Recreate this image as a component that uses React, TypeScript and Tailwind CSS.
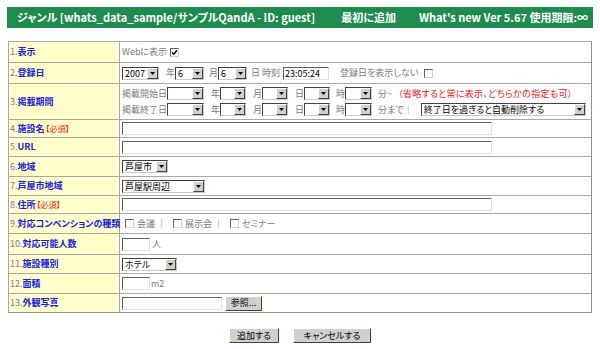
import React from "react";

const Arrow = () => (
  <svg width="5" height="3" viewBox="0 0 5 3">
    <path d="M0 0H5L2.5 3Z" fill="#000" />
  </svg>
);

function Sel({ w, text = "" }: { w: string; text?: string }) {
  return (
    <div className={`${w} h-[13px] flex shrink-0 border border-t-[#404040] border-l-[#404040] border-r-[#c8c8c8] border-b-[#c8c8c8] bg-white`}>
      <div className="flex-1 overflow-hidden whitespace-nowrap pl-[2px] text-[9px] leading-[11px] text-black">{text}</div>
      <div className="flex h-full w-[11px] items-center justify-center border border-t-white border-l-white border-r-[#404040] border-b-[#404040] bg-[#d4d0c8]">
        <Arrow />
      </div>
    </div>
  );
}

function Inp({ w, value = "" }: { w: string; value?: string }) {
  return (
    <div className={`${w} h-[13px] shrink-0 border border-t-[#606060] border-l-[#606060] border-r-[#e0e0e0] border-b-[#e0e0e0] bg-white pl-[1px] text-[9px] leading-[11px] text-black`}>
      {value}
    </div>
  );
}

function Chk({ checked = false }: { checked?: boolean }) {
  return (
    <div className="flex h-[9px] w-[9px] shrink-0 items-center justify-center border border-t-[#606060] border-l-[#606060] border-r-[#d0d0d0] border-b-[#d0d0d0] bg-white">
      {checked && (
        <svg width="7" height="7" viewBox="0 0 7 7">
          <path d="M1 3.2 L2.8 5.2 L6 1.2" stroke="#000" strokeWidth="1.4" fill="none" />
        </svg>
      )}
    </div>
  );
}

function Btn({ w, children }: { w: string; children: React.ReactNode }) {
  return (
    <div className={`${w} flex h-[15px] shrink-0 items-center justify-center border border-t-white border-l-white border-r-[#404040] border-b-[#404040] bg-[#d4d0c8] text-[9px] text-black`}>
      {children}
    </div>
  );
}

function Label({ n, name, req = false }: { n: string; name: string; req?: boolean }) {
  return (
    <div className="flex w-[111px] shrink-0 items-center whitespace-nowrap border-r border-[#a8a8a8] bg-[#ffffcc] pl-[1px] text-[9px]">
      <span className="text-[#7a7a9a]">{n}.</span>
      <span className="font-bold text-[#2020dd]">{name}</span>
      {req && <span className="ml-[1px] text-[8px] text-[#ff1010]">【必須】</span>}
    </div>
  );
}

function Row({ h, first = false, children }: { h: string; first?: boolean; children: React.ReactNode }) {
  return (
    <div className={`${h} flex ${first ? "" : "border-t border-[#a8a8a8]"}`}>{children}</div>
  );
}

const G = "text-[#7a7a7a]";

export default function App() {
  return (
    <div className="h-[349px] w-[600px] bg-white pt-[7px] font-['Noto_Sans_CJK_JP',sans-serif] [font-feature-settings:'palt']">
      <div className="ml-[7px] flex h-[21px] w-[586px] items-center bg-[#1e8c4f] pl-[10px] pr-[5px] text-[11px] font-bold whitespace-nowrap text-white">
        <span>ジャンル [whats_data_sample/サンプルQandA - ID: guest]</span>
        <span className="ml-auto">最初に追加</span>
        <span className="ml-[23px]">What's new Ver 5.67 使用期限:∞</span>
      </div>

      <div className="ml-[8px] mt-[13px] w-[584px] border border-[#a8a8a8] border-r-[#909090] border-b-[#909090]">
        <Row h="h-[20px]" first>
          <Label n="1" name="表示" />
          <div className="flex items-center pl-[2px] text-[9px]">
            <span className={G}>Webに表示</span>
            <span className="ml-[3px]"><Chk checked /></span>
          </div>
        </Row>
        <Row h="h-[21px]">
          <Label n="2" name="登録日" />
          <div className="flex items-center pl-[2px] text-[9px]">
            <Sel w="w-[37px]" text="2007" />
            <span className={`ml-[7px] ${G}`}>年</span>
            <Sel w="w-[29px]" text="6" />
            <span className={`ml-[5px] ${G}`}>月</span>
            <Sel w="w-[29px]" text="6" />
            <span className={`ml-[4px] ${G}`}>日 時刻</span>
            <span className="ml-[3px]"><Inp w="w-[46px]" value="23:05:24" /></span>
            <span className={`ml-[11px] ${G}`}>登録日を表示しない</span>
            <span className="ml-[6px]"><Chk /></span>
          </div>
        </Row>
        <Row h="h-[36px]">
          <Label n="3" name="掲載期間" />
          <div className="flex flex-col justify-center gap-[3px] pl-[2px] text-[9px]">
            <div className="flex items-center">
              <span className={G}>掲載開始日</span>
              <Sel w="w-[37px]" />
              <span className={`ml-[7px] ${G}`}>年</span>
              <Sel w="w-[26px]" />
              <span className={`ml-[7px] ${G}`}>月</span>
              <Sel w="w-[26px]" />
              <span className={`ml-[7px] ${G}`}>日</span>
              <Sel w="w-[26px]" />
              <span className={`ml-[6px] ${G}`}>時</span>
              <Sel w="w-[27px]" />
              <span className={`ml-[6px] ${G}`}>分~</span>
              <span className="ml-[6px] tracking-[0.3px] text-[#ff1010]">（省略すると常に表示、どちらかの指定も可）</span>
            </div>
            <div className="flex items-center">
              <span className={G}>掲載終了日</span>
              <Sel w="w-[37px]" />
              <span className={`ml-[7px] ${G}`}>年</span>
              <Sel w="w-[26px]" />
              <span className={`ml-[7px] ${G}`}>月</span>
              <Sel w="w-[26px]" />
              <span className={`ml-[7px] ${G}`}>日</span>
              <Sel w="w-[26px]" />
              <span className={`ml-[6px] ${G}`}>時</span>
              <Sel w="w-[27px]" />
              <span className={`ml-[6px] ${G}`}>分まで｜</span>
              <span className="ml-[8px]"><Sel w="w-[165px]" text="終了日を過ぎると自動削除する" /></span>
            </div>
          </div>
        </Row>
        <Row h="h-[18px]">
          <Label n="4" name="施設名" req />
          <div className="flex items-center pl-[2px]"><Inp w="w-[370px]" /></div>
        </Row>
        <Row h="h-[19px]">
          <Label n="5" name="URL" />
          <div className="flex items-center pl-[2px]"><Inp w="w-[370px]" /></div>
        </Row>
        <Row h="h-[20px]">
          <Label n="6" name="地域" />
          <div className="flex items-center pl-[2px]"><Sel w="w-[46px]" text="芦屋市" /></div>
        </Row>
        <Row h="h-[19px]">
          <Label n="7" name="芦屋市地域" />
          <div className="flex items-center pl-[2px]"><Sel w="w-[83px]" text="芦屋駅周辺" /></div>
        </Row>
        <Row h="h-[18px]">
          <Label n="8" name="住所" req />
          <div className="flex items-center pl-[2px]"><Inp w="w-[370px]" /></div>
        </Row>
        <Row h="h-[20px]">
          <Label n="9" name="対応コンベンションの種類" />
          <div className="flex items-center pl-[5px] text-[9px]">
            <Chk />
            <span className={`ml-[3px] ${G}`}>会議 ｜</span>
            <span className="ml-[7px]"><Chk /></span>
            <span className={`ml-[3px] ${G}`}>展示会 ｜</span>
            <span className="ml-[7px]"><Chk /></span>
            <span className={`ml-[3px] ${G}`}>セミナー</span>
          </div>
        </Row>
        <Row h="h-[21px]">
          <Label n="10" name="対応可能人数" />
          <div className="flex items-center pl-[2px] text-[9px]">
            <Inp w="w-[28px]" />
            <span className={`ml-[2px] ${G}`}>人</span>
          </div>
        </Row>
        <Row h="h-[19px]">
          <Label n="11" name="施設種別" />
          <div className="flex items-center pl-[2px]"><Sel w="w-[55px]" text="ホテル" /></div>
        </Row>
        <Row h="h-[20px]">
          <Label n="12" name="面積" />
          <div className="flex items-center pl-[2px] text-[9px]">
            <Inp w="w-[28px]" />
            <span className={`ml-[1px] ${G}`}>m2</span>
          </div>
        </Row>
        <Row h="h-[19px]">
          <Label n="13" name="外観写真" />
          <div className="flex items-center pl-[2px] text-[9px]">
            <Inp w="w-[100px]" />
            <span className="ml-[3px]"><Btn w="w-[37px]">参照...</Btn></span>
          </div>
        </Row>
      </div>

      <div className="mt-[15px] flex justify-center gap-[14px]">
        <Btn w="w-[50px]">追加する</Btn>
        <Btn w="w-[78px]">キャンセルする</Btn>
      </div>
    </div>
  );
}
